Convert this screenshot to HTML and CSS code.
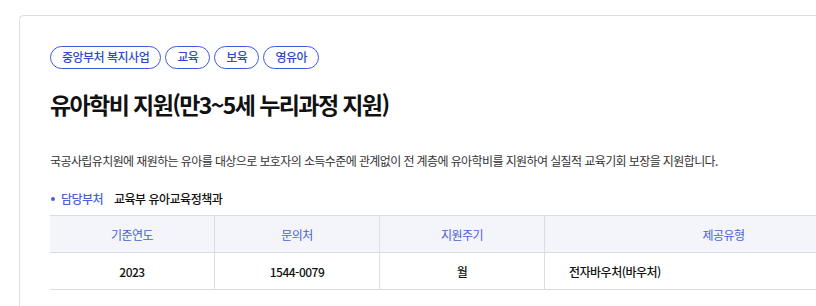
FILE: index.html
```html
<!DOCTYPE html>
<html lang="ko">
<head>
    <meta charset="UTF-8">
    <meta name="viewport" content="width=device-width, initial-scale=1.0">
    <title>유아학비 지원</title>
    <link rel="stylesheet" href="styles.css">
</head>
<body>
    <div class="card">
        <div class="tags">
            <span class="tag">중앙부처 복지사업</span>
            <span class="tag">교육</span>
            <span class="tag">보육</span>
            <span class="tag">영유아</span>
        </div>
        <h1 class="title">유아학비 지원(만3~5세 누리과정 지원)</h1>
        <p class="desc">국공사립유치원에 재원하는 유아를 대상으로 보호자의 소득수준에 관계없이 전 계층에 유아학비를 지원하여 실질적 교육기회 보장을 지원합니다.</p>
        <div class="dept">
            <span class="dept-label">담당부처</span>
            <span class="dept-name">교육부 유아교육정책과</span>
        </div>
        <table class="info">
            <thead>
                <tr>
                    <th class="col">기준연도</th>
                    <th class="col">문의처</th>
                    <th class="col">지원주기</th>
                    <th>제공유형</th>
                </tr>
            </thead>
            <tbody>
                <tr>
                    <td>2023</td>
                    <td>1544-0079</td>
                    <td>월</td>
                    <td class="left">전자바우처(바우처)</td>
                </tr>
            </tbody>
        </table>
    </div>
</body>
</html>
```

FILE: styles.css
```css
body {
    margin: 0;
    padding: 15px 0 0 19px;
    background: #fff;
    font-family: "Noto Sans CJK KR", "Noto Sans", sans-serif;
    color: #222;
    letter-spacing: -0.5px;
    overflow: hidden;
}
.card {
    width: 920px;
    height: 300px;
    border: 1px solid #dedede;
    border-right: none;
    border-radius: 5px 0 0 0;
    padding: 30px 0 0 30px;
}
.tags {
    display: flex;
    gap: 4px;
}
.tag {
    display: inline-block;
    height: 21px;
    line-height: 20px;
    padding: 0 11px;
    border: 1px solid #3d5ad6;
    border-radius: 12px;
    font-size: 12px;
    font-weight: 500;
    color: #2f4ac9;
}
.title {
    margin: 18px 0 0;
    font-size: 23px;
    line-height: 34px;
    font-weight: 700;
    color: #111;
    letter-spacing: -1.6px;
}
.desc {
    margin: 31px 0 0;
    font-size: 12px;
    line-height: 18px;
    color: #333;
    letter-spacing: -0.6px;
}
.dept {
    margin-top: 20px;
    display: flex;
    align-items: center;
    font-size: 12px;
    line-height: 18px;
}
.dept-label {
    position: relative;
    padding-left: 11px;
    color: #4a5fd8;
    font-weight: 500;
    width: 53px;
}
.dept-label::before {
    content: "";
    position: absolute;
    left: 1px;
    top: 7px;
    width: 4px;
    height: 4px;
    border-radius: 50%;
    background: #4a5fd8;
}
.dept-name {
    font-weight: 500;
    color: #111;
}
.info {
    margin-top: 7px;
    width: 852px;
    border-collapse: collapse;
    font-size: 12px;
}
.info th,
.info td {
    height: 36px;
    padding: 0;
    border-top: 1px solid #dcdde2;
    border-bottom: 1px solid #dcdde2;
    border-left: 1px solid #dcdde2;
    text-align: center;
}
.info th:first-child,
.info td:first-child {
    border-left: none;
}
.info th {
    background: #f4f5fa;
    color: #4a5fd8;
    font-weight: 400;
}
.info td {
    color: #111;
    font-weight: 500;
}
.info .col {
    width: 164px;
}
.info td.left {
    text-align: left;
    padding-left: 24px;
}
```
